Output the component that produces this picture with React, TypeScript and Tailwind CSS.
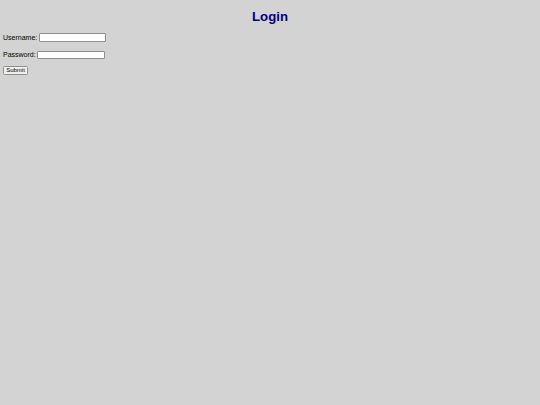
export default function App() {
  return (
    <div className="min-h-screen bg-[#d3d3d3] font-['Liberation_Sans',Arial,sans-serif] text-black">
      <h1 className="pt-[8.6px] text-center text-[13.2px] font-bold leading-[15px] text-[#000080]">Login</h1>
      <form className="px-[3px]" onSubmit={(e) => e.preventDefault()}>
        <div className="mt-[9.7px] flex h-[9px] items-center text-[7px] leading-[9px]">
          <label htmlFor="username">Username:</label>
          <input
            id="username"
            type="text"
            className="ml-[1.5px] h-[9px] w-[67px] rounded-[1px] border border-[#8f8f8f] bg-white outline-none"
          />
        </div>
        <div className="mt-[8.4px] flex h-[8px] items-center text-[7px] leading-[9px]">
          <label htmlFor="password">Password:</label>
          <input
            id="password"
            type="password"
            className="ml-[1px] h-[8px] w-[68px] rounded-[1px] border border-[#8f8f8f] bg-white outline-none"
          />
        </div>
        <div className="mt-[7.3px] flex">
          <button
            type="submit"
            className="h-[9.5px] w-[25px] rounded-[1.5px] border border-[#8f8f8f] bg-[#f0f0f0] text-[6px] leading-[7px]"
          >
            Submit
          </button>
        </div>
      </form>
    </div>
  );
}
